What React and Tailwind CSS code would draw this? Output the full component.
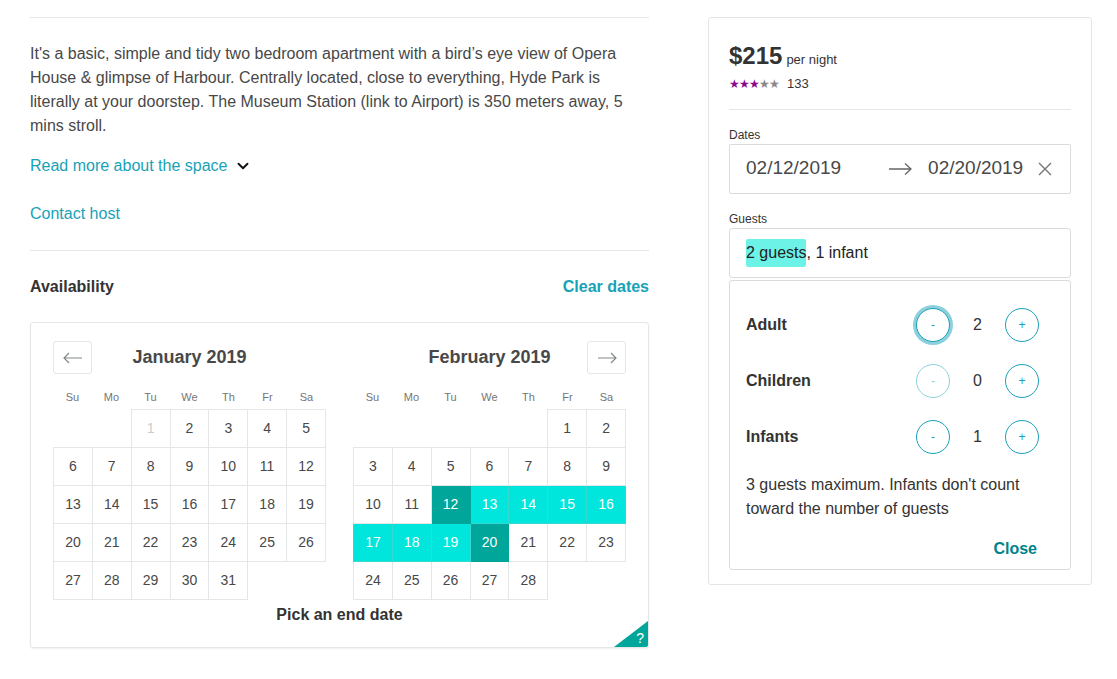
import { ChevronDown } from 'lucide-react'

const WEEKDAYS = ['Su', 'Mo', 'Tu', 'We', 'Th', 'Fr', 'Sa']

const START = 12
const END = 20

// build weeks for a month: offset = weekday of the 1st
function buildWeeks(offset, days) {
  const cells = []
  for (let i = 0; i < offset; i++) cells.push(null)
  for (let d = 1; d <= days; d++) cells.push(d)
  while (cells.length % 7 !== 0) cells.push(null)
  const weeks = []
  for (let i = 0; i < cells.length; i += 7) weeks.push(cells.slice(i, i + 7))
  return weeks
}

function ArrowIcon({ dir }) {
  return (
    <svg width="20" height="12" viewBox="0 0 20 12" fill="none" stroke="#82888a" strokeWidth="1.2">
      {dir === 'left' ? (
        <path d="M19 6H1M6 1L1 6l5 5" />
      ) : (
        <path d="M1 6h18M14 1l5 5-5 5" />
      )}
    </svg>
  )
}

function NavButton({ dir }) {
  return (
    <button className="w-[39px] h-[33px] border border-[#e4e7e7] rounded-[3px] flex items-center justify-center bg-white">
      <ArrowIcon dir={dir} />
    </button>
  )
}

function Month({ title, offset, days, highlight, nav }) {
  const weeks = buildWeeks(offset, days)
  return (
    <div className="w-[273px] flex flex-col">
      <div className="grid grid-cols-[39px_1fr_39px] items-center h-[33px]">
        {nav === 'left' ? <NavButton dir="left" /> : <div />}
        <div className="text-center text-[18px] font-bold text-[#484848]">{title}</div>
        {nav === 'right' ? <NavButton dir="right" /> : <div />}
      </div>
      <div className="grid grid-cols-7 mt-[16px] mb-[5px]">
        {WEEKDAYS.map((w) => (
          <div key={w} className="text-center text-[11px] text-[#757575] leading-[14px]">{w}</div>
        ))}
      </div>
      <table className="border-collapse">
        <tbody>
          {weeks.map((week, wi) => (
            <tr key={wi}>
              {week.map((d, di) => {
                if (d === null) return <td key={di} className="w-[39px] h-[38px] p-0" />
                let cls = 'border border-[#e4e7e7] text-[#484848] bg-white'
                if (highlight && (d === START || d === END)) {
                  cls = 'border border-[#00a699] bg-[#00a699] text-white'
                } else if (highlight && d > START && d < END) {
                  cls = 'border border-[#33dacd] bg-[#00e6dc] text-white'
                } else if (!highlight && d === 1) {
                  cls = 'border border-[#e4e7e7] text-[#cacccd] bg-white'
                }
                return (
                  <td key={di} className={`w-[39px] h-[38px] p-0 text-center text-[14px] ${cls}`}>
                    {d}
                  </td>
                )
              })}
            </tr>
          ))}
        </tbody>
      </table>
    </div>
  )
}

function Counter({ label, value, focused, disabled }) {
  let minusCls = 'border border-[#17a2b8] text-[#17a2b8]'
  if (focused) minusCls = 'border border-[#17a2b8] text-[#17a2b8] shadow-[0_0_0_3px_rgba(23,162,184,0.5)]'
  if (disabled) minusCls = 'border border-[#8cd2de] text-[#8cd2de]'
  return (
    <div className="flex items-center h-[34px]">
      <div className="flex-1 text-[16px] font-bold text-[#333]">{label}</div>
      <button className={`w-[34px] h-[34px] rounded-full flex items-center justify-center text-[12px] bg-white ${minusCls}`}>
        -
      </button>
      <div className="w-[55px] text-center text-[16px] text-[#333]">{value}</div>
      <button className="w-[34px] h-[34px] rounded-full flex items-center justify-center text-[12px] bg-white border border-[#17a2b8] text-[#17a2b8]">
        +
      </button>
    </div>
  )
}

export default function App() {
  return (
    <div className="min-h-[679px] bg-white font-['Liberation_Sans',Arial,sans-serif] text-[#484848]">
      <div className="flex gap-[59px] pl-[30px] pt-[17px]">
        {/* Left column */}
        <div className="w-[619px] shrink-0">
          <div className="border-t border-[#e6e6e6]" />
          <p className="mt-[24px] text-[16px] leading-[24px] text-[#484848]">
            It's a basic, simple and tidy two bedroom apartment with a bird’s eye view of Opera House &amp; glimpse of Harbour. Centrally located, close to everything, Hyde Park is literally at your doorstep. The Museum Station (link to Airport) is 350 meters away, 5 mins stroll.
          </p>
          <div className="mt-[16px] flex items-center gap-[7px] text-[16px] leading-[24px] text-[#17a2b8]">
            <span>Read more about the space</span>
            <ChevronDown size={18} strokeWidth={2.5} className="text-[#111]" />
          </div>
          <div className="mt-[24px] text-[16px] leading-[24px] text-[#17a2b8]">Contact host</div>
          <div className="mt-[24px] border-t border-[#e6e6e6]" />
          <div className="mt-[26px] flex items-center justify-between leading-[20px]">
            <span className="text-[16px] font-bold text-[#333]">Availability</span>
            <span className="text-[16px] font-bold text-[#17a2b8]">Clear dates</span>
          </div>

          {/* Calendar */}
          <div className="relative mt-[25px] border border-[#e4e7e7] rounded-[3px] shadow-[0_1px_2px_rgba(0,0,0,0.06)] pt-[18px] pb-[22px] overflow-hidden">
            <div className="flex gap-[27px] pl-[22px]">
              <Month title="January 2019" offset={2} days={31} nav="left" />
              <Month title="February 2019" offset={5} days={28} highlight nav="right" />
            </div>
            <div className="mt-[5px] text-center text-[16px] font-bold text-[#333] leading-[20px]">Pick an end date</div>
            <div className="absolute right-0 bottom-0 w-[34px] h-[26px]">
              <svg width="34" height="26" viewBox="0 0 34 26" className="absolute inset-0">
                <polygon points="34,0 34,26 0,26" fill="#00a699" />
              </svg>
              <span className="absolute right-[4px] bottom-[1px] text-[14px] text-white leading-[16px]">?</span>
            </div>
          </div>
        </div>

        {/* Right column: booking panel */}
        <div className="w-[384px] shrink-0">
          <div className="border border-[#e4e4e4] rounded-[3px] px-[20px] pt-[24px] pb-[20px]">
            <div className="flex items-baseline gap-[4px]">
              <span className="text-[24px] font-bold text-[#333] leading-[28px]">$215</span>
              <span className="text-[13px] text-[#333]">per night</span>
            </div>
            <div className="flex items-center gap-[8px] mt-[4px]">
              <span className="text-[12px] tracking-[-1px] leading-[16px]">
                <span className="text-[#8a0a8a]">★★★</span>
                <span className="text-[#888]">★★</span>
              </span>
              <span className="text-[13px] text-[#333]">133</span>
            </div>
            <div className="mt-[15px] border-t border-[#e6e6e6]" />

            <div className="mt-[18px] text-[12px] text-[#333] leading-[14px]">Dates</div>
            <div className="mt-[2px] h-[50px] border border-[#dbdbdb] rounded-[2px] flex items-center pl-[16px] pr-[18px]">
              <span className="text-[19px] text-[#484848]">02/12/2019</span>
              <span className="ml-[47px]">
                <svg width="25" height="14" viewBox="0 0 25 14" fill="none" stroke="#666" strokeWidth="1.3">
                  <path d="M1 7h22M17 1.5L23 7l-6 5.5" />
                </svg>
              </span>
              <span className="ml-[15px] text-[19px] text-[#484848]">02/20/2019</span>
              <span className="ml-auto">
                <svg width="14" height="14" viewBox="0 0 14 14" stroke="#757575" strokeWidth="1.4">
                  <path d="M1 1l12 12M13 1L1 13" />
                </svg>
              </span>
            </div>

            <div className="mt-[18px] text-[12px] text-[#333] leading-[14px]">Guests</div>
            <div className="relative mt-[2px]">
              <div className="h-[50px] border border-[#dbdbdb] rounded-[3px] flex items-center pl-[16px] text-[16px] text-[#222]">
                <span className="bg-[#6cf2e6] rounded-[2px] h-[28px] flex items-center">2 guests</span>
                <span>, 1 infant</span>
              </div>

              {/* Guests popover */}
              <div className="absolute left-0 right-0 top-[52px] z-10 bg-white border border-[#dbdbdb] rounded-[3px] pl-[16px] pr-[31px] pt-[27px] pb-[10px]">
                <div className="flex flex-col gap-[22px]">
                  <Counter label="Adult" value={2} focused />
                  <Counter label="Children" value={0} disabled />
                  <Counter label="Infants" value={1} />
                </div>
                <p className="mt-[19px] text-[16px] leading-[24px] text-[#333]">
                  3 guests maximum. Infants don't count toward the number of guests
                </p>
                <div className="mt-[18px] flex justify-end pr-[2px]">
                  <span className="text-[16px] font-bold text-[#008489] leading-[20px]">Close</span>
                </div>
              </div>
            </div>
            {/* rest of the booking form sits under the popover */}
            <div className="h-[286px]" />
          </div>
        </div>
      </div>
    </div>
  )
}
